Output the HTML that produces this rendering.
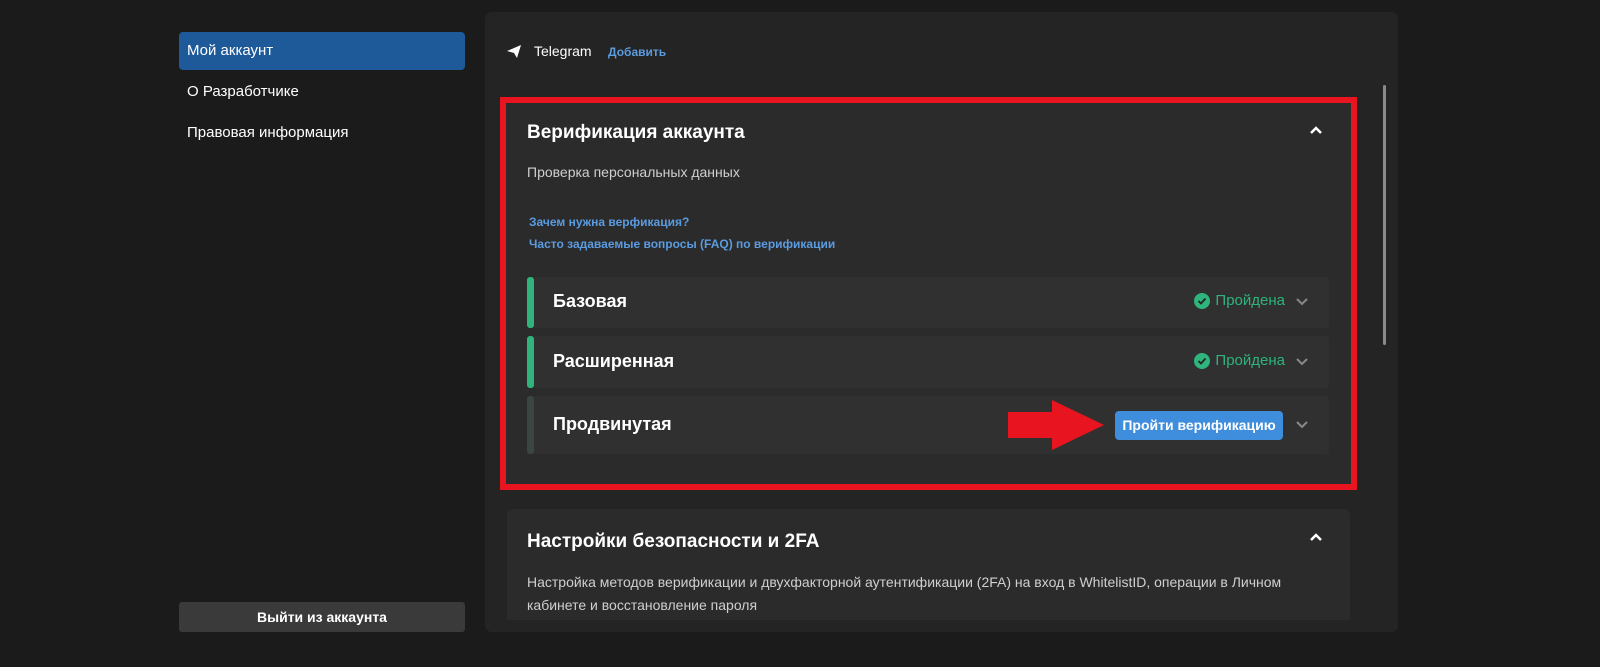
<!DOCTYPE html>
<html><head><meta charset="utf-8"><style>
*{margin:0;padding:0;box-sizing:border-box}
body{width:1600px;height:667px;background:#1b1b1b;font-family:"Liberation Sans",sans-serif;color:#fff;position:relative;overflow:hidden}
.a{position:absolute}
.nav{left:179px;width:286px;height:38px;font-size:15px;padding-left:8px;line-height:38px}
.card{background:#2b2b2b;border-radius:6px}
.row{position:absolute;left:527px;width:802px;background:#303030;border-radius:4px}
.bar{position:absolute;left:0;top:0;bottom:0;width:7px;border-radius:3px;background:#2eb47c}
.rt{position:absolute;left:26px;font-size:18px;font-weight:bold}
.ok{position:absolute;right:44px;color:#2eb47c;font-size:15px;display:flex;align-items:center;gap:5px}
.chev{position:absolute;right:20px}
</style></head><body>
<div class="a nav" style="top:32px;background:#1e5a99;border-radius:4px">Мой аккаунт</div>
<div class="a nav" style="top:73px">О Разработчике</div>
<div class="a nav" style="top:114px">Правовая информация</div>
<div class="a" style="left:179px;top:602px;width:286px;height:30px;background:#3a3a3a;border-radius:3px;font-size:14px;font-weight:bold;text-align:center;line-height:30px">Выйти из аккаунта</div>

<div class="a" style="left:485px;top:12px;width:913px;height:620px;background:#242424;border-radius:7px;overflow:hidden">
</div>
<svg class="a" style="left:506px;top:44px" width="16" height="15" viewBox="0 0 16 15"><path d="M1 7 L15 1 L11 14 L8 9 Z M8 9 L15 1" fill="#fff"/></svg>
<div class="a" style="left:534px;top:43px;font-size:14px">Telegram</div>
<div class="a" style="left:608px;top:45px;font-size:12px;font-weight:bold;color:#5b9be0">Добавить</div>
<div class="a" style="left:1383px;top:85px;width:3px;height:260px;background:#8a8a8a;border-radius:2px"></div>

<div class="a" style="left:500px;top:97px;width:857px;height:393px;border:6px solid #e8141f"></div>
<div class="a card" style="left:506px;top:103px;width:845px;height:381px;border-radius:0"></div>
<div class="a" style="left:527px;top:122px;font-size:19px;font-weight:bold">Верификация аккаунта</div>
<svg class="a" style="left:1309px;top:125px" width="14" height="10"><path d="M2 8 L7 3 L12 8" stroke="#fff" stroke-width="2.5" fill="none"/></svg>
<div class="a" style="left:527px;top:164px;font-size:14px;color:#cfcfcf">Проверка персональных данных</div>
<div class="a" style="left:529px;top:215px;font-size:12px;font-weight:bold;color:#5b9be0">Зачем нужна верфикация?</div>
<div class="a" style="left:529px;top:237px;font-size:12px;font-weight:bold;color:#5b9be0">Часто задаваемые вопросы (FAQ) по верификации</div>

<div class="row" style="top:277px;height:51px"><div class="bar"></div><div class="rt" style="top:14px">Базовая</div>
<div class="ok" style="top:15px"><svg width="16" height="16"><circle cx="8" cy="8" r="8" fill="#2eb47c"/><path d="M4.5 8 L7 10.5 L11.5 5.5" stroke="#222" stroke-width="1.8" fill="none"/></svg>Пройдена</div>
<svg class="chev" style="top:20px" width="14" height="10"><path d="M2 2 L7 7 L12 2" stroke="#888" stroke-width="2" fill="none"/></svg></div>
<div class="row" style="top:336px;height:52px"><div class="bar"></div><div class="rt" style="top:15px">Расширенная</div>
<div class="ok" style="top:16px"><svg width="16" height="16"><circle cx="8" cy="8" r="8" fill="#2eb47c"/><path d="M4.5 8 L7 10.5 L11.5 5.5" stroke="#222" stroke-width="1.8" fill="none"/></svg>Пройдена</div>
<svg class="chev" style="top:21px" width="14" height="10"><path d="M2 2 L7 7 L12 2" stroke="#888" stroke-width="2" fill="none"/></svg></div>
<div class="row" style="top:396px;height:58px"><div class="bar" style="background:#3b4640"></div><div class="rt" style="top:18px">Продвинутая</div>
<div class="a" style="left:588px;top:15px;width:168px;height:29px;background:#3f8ede;border-radius:4px;font-size:14px;font-weight:bold;text-align:center;line-height:29px">Пройти верификацию</div>
<svg class="chev" style="top:24px" width="14" height="10"><path d="M2 2 L7 7 L12 2" stroke="#888" stroke-width="2" fill="none"/></svg></div>
<svg class="a" style="left:1008px;top:400px" width="96" height="50"><polygon points="0,12 44,12 44,0 96,25 44,50 44,38 0,38" fill="#e8141f"/></svg>

<div class="a card" style="left:507px;top:509px;width:843px;height:111px;border-radius:6px 6px 0 0"></div>
<div class="a" style="left:527px;top:531px;font-size:19px;font-weight:bold">Настройки безопасности и 2FA</div>
<svg class="a" style="left:1309px;top:532px" width="14" height="10"><path d="M2 8 L7 3 L12 8" stroke="#fff" stroke-width="2.5" fill="none"/></svg>
<div class="a" style="left:527px;top:571px;width:800px;font-size:14px;line-height:23px;color:#cfcfcf">Настройка методов верификации и двухфакторной аутентификации (2FA) на вход в WhitelistID, операции в Личном кабинете и восстановление пароля</div>
</body></html>
